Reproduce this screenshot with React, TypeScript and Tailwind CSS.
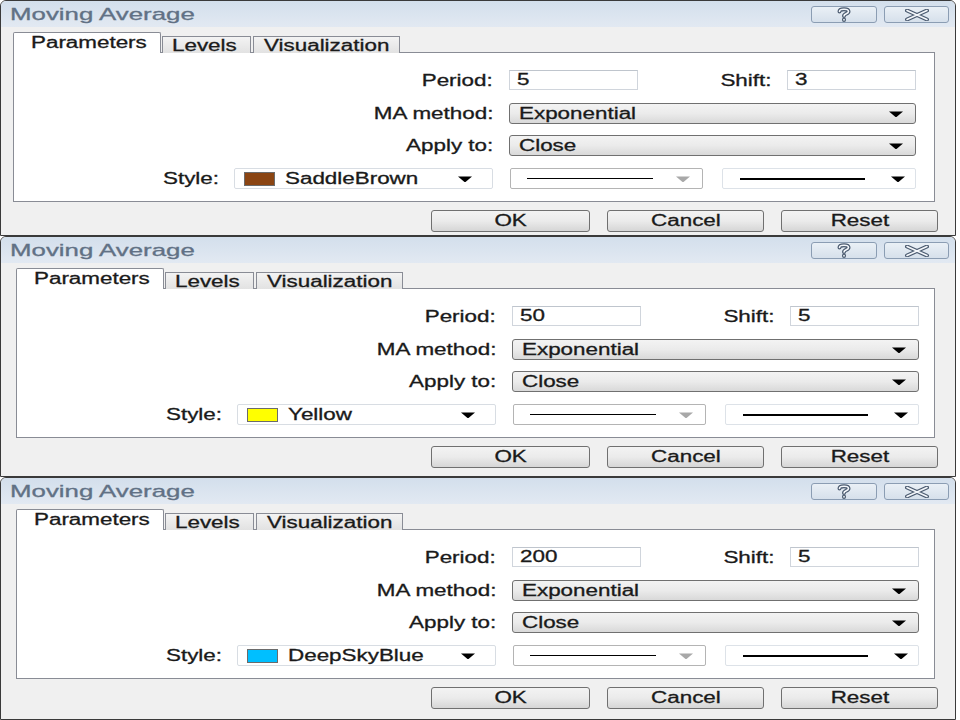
import React from 'react';

interface DialogConfig {
  height: string;
  inset: string;
  period: string;
  shift: string;
  colorName: string;
  swatch: string;
}

const dialogs: DialogConfig[] = [
  { height: 'h-[236px]', inset: 'pl-[12px]', period: '5', shift: '3', colorName: 'SaddleBrown', swatch: 'bg-[#8b4513]' },
  { height: 'h-[241px]', inset: 'pl-[15px]', period: '50', shift: '5', colorName: 'Yellow', swatch: 'bg-[#ffff00]' },
  { height: 'h-[243px]', inset: 'pl-[15px]', period: '200', shift: '5', colorName: 'DeepSkyBlue', swatch: 'bg-[#00bfff]' },
];

// stretched text, the screenshot is scaled wider than tall
const Wide: React.FC<{ children: React.ReactNode; origin?: string }> = ({ children, origin = 'origin-left' }) => (
  <span className={`inline-block whitespace-nowrap scale-x-[1.4] [-webkit-text-stroke:0.3px] ${origin}`}>{children}</span>
);

const Arrow: React.FC<{ muted?: boolean }> = ({ muted }) => (
  <svg width="14" height="6" viewBox="0 0 14 6" className="shrink-0">
    <path d="M0 0.5h14L7.5 6h-1z" fill={muted ? '#a8a8a8' : '#000'} />
  </svg>
);

const HelpIcon = () => (
  <svg width="16" height="15" viewBox="0 0 16 15">
    <g fill="none" strokeLinecap="round" strokeLinejoin="round">
      <path d="M3.5 4.5C3.5 1.5 12.5 1.5 12.5 4.5C12.5 7 8 6.5 8 9" stroke="#4b5b70" strokeWidth="4" />
      <path d="M8 12.5v0.5" stroke="#4b5b70" strokeWidth="4" />
      <path d="M3.5 4.5C3.5 1.5 12.5 1.5 12.5 4.5C12.5 7 8 6.5 8 9" stroke="#f4f7fb" strokeWidth="1.6" />
      <path d="M8 12.5v0.5" stroke="#f4f7fb" strokeWidth="1.6" />
    </g>
  </svg>
);

const CloseIcon = () => (
  <svg width="26" height="12" viewBox="0 0 26 12">
    <g fill="none" strokeLinecap="round">
      <path d="M3 1.5L23 10.5M23 1.5L3 10.5" stroke="#4b5b70" strokeWidth="4" />
      <path d="M3 1.5L23 10.5M23 1.5L3 10.5" stroke="#f4f7fb" strokeWidth="1.6" />
    </g>
  </svg>
);

const GraySelect: React.FC<{ value: string }> = ({ value }) => (
  <div className="w-[407px] h-[21px] flex items-center pl-[9px] pr-[12px] border border-[#707070] rounded-[3px] bg-gradient-to-b from-[#f3f3f3] via-[#ebebeb] to-[#d9d9d9] text-[16px] text-[#1a1a1a]">
    <Wide>{value}</Wide>
    <div className="ml-auto"><Arrow /></div>
  </div>
);

const Dialog: React.FC<{ cfg: DialogConfig }> = ({ cfg }) => (
  <div className={`${cfg.height} w-[956px] shrink-0 flex flex-col border border-[#3a3a3a] rounded-t-[6px] overflow-hidden bg-[#f0f0f0]`}>
    <div className="h-[26px] shrink-0 flex items-center pl-[9px] pr-[6px] bg-gradient-to-b from-[#d3dfec] to-[#e2e9f2]">
      <span className="inline-block whitespace-nowrap origin-left scale-x-[1.52] text-[17px] text-[#617185] [-webkit-text-stroke:0.3px] mt-[1px]">Moving Average</span>
      <div className="ml-auto flex gap-[7px] mt-[1px]">
        <div className="w-[66px] h-[17px] flex items-center justify-center border border-[#8b9db3] rounded-[3px] bg-gradient-to-b from-[#eaf0f6] to-[#d6e0eb]">
          <HelpIcon />
        </div>
        <div className="w-[65px] h-[17px] flex items-center justify-center border border-[#8b9db3] rounded-[3px] bg-gradient-to-b from-[#eaf0f6] to-[#d6e0eb]">
          <CloseIcon />
        </div>
      </div>
    </div>

    <div className={`flex-1 flex flex-col pt-[5px] ${cfg.inset}`}>
      {/* tabs */}
      <div className="flex items-end h-[21px] relative z-10">
        <div className="w-[148px] h-[21px] pl-[17px] bg-white border border-b-0 border-[#898c95] rounded-t-[2px] text-[16px] leading-[19px] text-[#1a1a1a]">
          <Wide>Parameters</Wide>
        </div>
        <div className="w-[89px] h-[17px] ml-[1px] pl-[9px] border border-b-0 border-[#898c95] bg-gradient-to-b from-[#f3f3f3] to-[#e2e2e2] text-[16px] leading-[17px] text-[#1a1a1a]">
          <Wide>Levels</Wide>
        </div>
        <div className="w-[147px] h-[17px] ml-[2px] pl-[10px] border border-b-0 border-[#898c95] bg-gradient-to-b from-[#f3f3f3] to-[#e2e2e2] text-[16px] leading-[17px] text-[#1a1a1a]">
          <Wide>Visualization</Wide>
        </div>
      </div>

      {/* panel */}
      <div className="-mt-px h-[150px] mr-[20px] border border-[#898c95] bg-white flex flex-col text-[16px] text-[#1a1a1a]">
        <div className="mt-[17px] h-[20px] flex items-center">
          <div className="w-[479px] text-right pt-[2px]"><Wide origin="origin-right">Period:</Wide></div>
          <div className="ml-[16px] w-[129px] h-[20px] pl-[7px] flex items-center border border-[#d0d5dc] border-t-[#bfc5cd]">
            <Wide>{cfg.period}</Wide>
          </div>
          <div className="w-[133px] text-right pt-[2px]"><Wide origin="origin-right">Shift:</Wide></div>
          <div className="ml-[16px] w-[129px] h-[20px] pl-[7px] flex items-center border border-[#d0d5dc] border-t-[#bfc5cd]">
            <Wide>{cfg.shift}</Wide>
          </div>
        </div>

        <div className="mt-[13px] h-[21px] flex items-center">
          <div className="w-[479px] text-right"><Wide origin="origin-right">MA method:</Wide></div>
          <div className="ml-[16px]"><GraySelect value="Exponential" /></div>
        </div>

        <div className="mt-[11px] h-[21px] flex items-center">
          <div className="w-[479px] text-right"><Wide origin="origin-right">Apply to:</Wide></div>
          <div className="ml-[16px]"><GraySelect value="Close" /></div>
        </div>

        <div className="mt-[12px] h-[21px] flex items-center">
          <div className="w-[205px] text-right"><Wide origin="origin-right">Style:</Wide></div>
          <div className="ml-[15px] w-[259px] h-[21px] flex items-center pl-[9px] pr-[20px] border border-[#d8dde3] rounded-[2px]">
            <div className={`w-[31px] h-[14px] border border-[#6b6b6b] ${cfg.swatch}`} />
            <div className="ml-[10px]"><Wide>{cfg.colorName}</Wide></div>
            <div className="ml-auto"><Arrow /></div>
          </div>
          <div className="ml-[17px] w-[193px] h-[21px] flex items-center pl-[16px] pr-[12px] border border-[#b4b4b4] rounded-[2px]">
            <div className="w-[126px] h-px bg-black" />
            <div className="ml-auto"><Arrow muted /></div>
          </div>
          <div className="ml-[19px] w-[194px] h-[21px] flex items-center pl-[17px] pr-[10px] border border-[#dde2e8] rounded-[2px]">
            <div className="w-[125px] h-[2px] bg-black" />
            <div className="ml-auto"><Arrow /></div>
          </div>
        </div>
      </div>

      {/* buttons */}
      <div className="mt-[8px] flex justify-end pr-[17px] text-[16px] text-[#1a1a1a]">
        {['OK', 'Cancel', 'Reset'].map((label, i) => (
          <div
            key={label}
            className={`${i === 0 ? 'w-[159px]' : 'w-[157px] ml-[17px]'} h-[22px] flex items-center justify-center border border-[#707070] rounded-[3px] bg-gradient-to-b from-[#f3f3f3] via-[#ebebeb] to-[#d6d6d6]`}
          >
            <Wide origin="origin-center">{label}</Wide>
          </div>
        ))}
      </div>
    </div>
  </div>
);

export default function App() {
  return (
    <div className="w-[960px] h-[720px] overflow-hidden bg-white flex flex-col font-['Liberation_Sans',Arial,sans-serif]">
      {dialogs.map((d, i) => (
        <Dialog key={i} cfg={d} />
      ))}
    </div>
  );
}
